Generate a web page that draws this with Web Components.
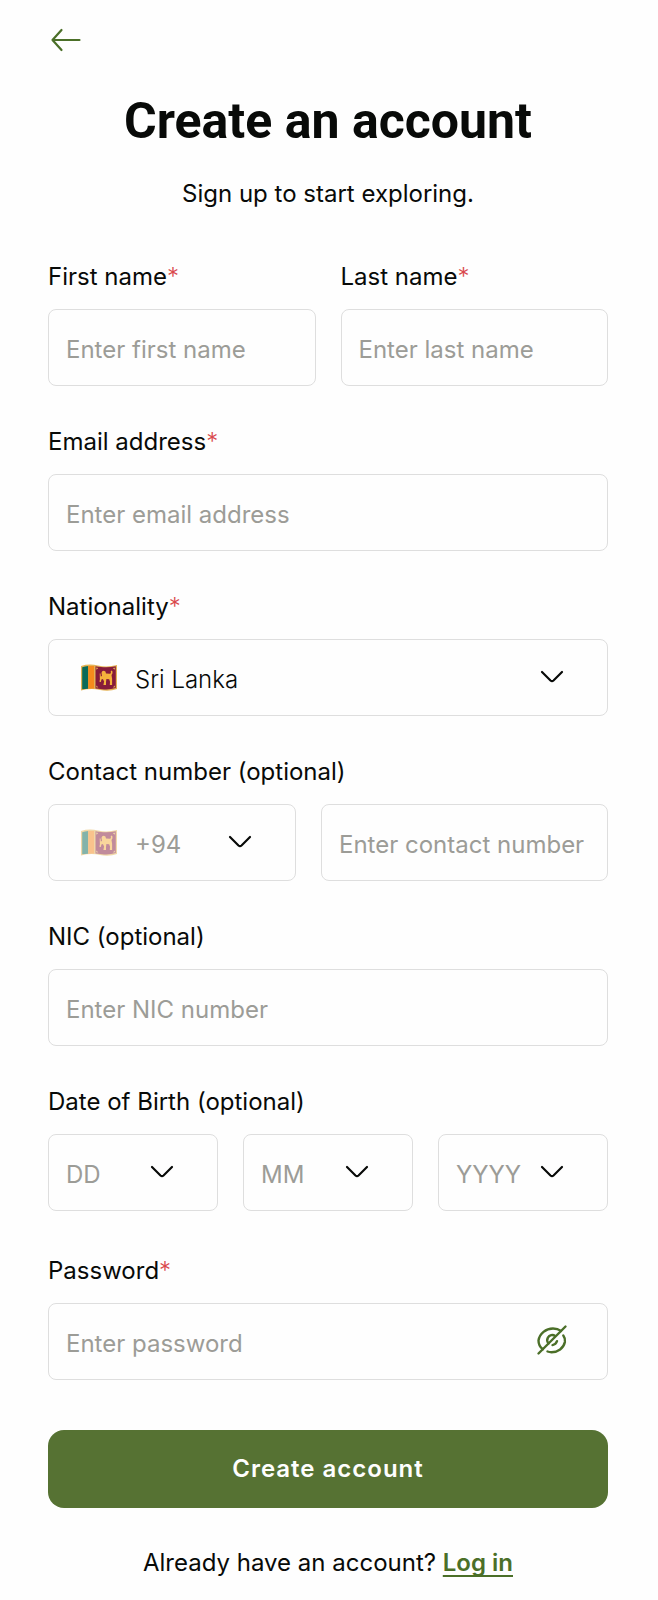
<!DOCTYPE html>
<html lang="en">
<head>
<meta charset="utf-8">
<meta name="viewport" content="width=device-width, initial-scale=1">
<title>Create an account</title>
<style>
  :root {
    --ink: #080a08;
    --muted: #9c9c97;
    --line: #dedede;
    --green: #567233;
    --link: #4b6f28;
    --danger: #d9484c;
    --control-height: 77px;
    --gap: 25px;
  }
  body {
    margin: 0;
    background: #fefefe;
    color: var(--ink);
    font: 400 24px/30px Inter, "Noto Sans", sans-serif;
  }
</style>
</head>
<body>
<sign-up-page></sign-up-page>

<template id="page-template">
  <style>
    :host { display: block; padding: 20px 50px 22px 48px; }
    header { text-align: center; }
    nav { display: flex; }
    nav button {
      display: flex; padding: 4px 2px; border: 0; background: none;
      color: var(--link); cursor: pointer;
    }
    h1 { margin: 33px 0 0; font: 700 50px/56px Roboto, sans-serif; }
    header p { margin: 30px 0 0; }
    form { display: grid; gap: 41px; margin-top: 53px; }
    .pair { display: grid; grid-template-columns: 1fr 1fr; gap: var(--gap); }
    .password { margin-top: 4px; }
    .submit {
      height: 78px; margin-top: 9px; border: 0; border-radius: 16px;
      background: var(--green); color: #fefefe; cursor: pointer;
      font: 600 24px/30px Inter, sans-serif; letter-spacing: 1px;
    }
    footer { margin-top: 40px; text-align: center; }
    a { color: var(--link); font-weight: 600; text-underline-offset: 4px; text-decoration-thickness: 2px; text-decoration-skip-ink: none; }
  </style>
  <nav>
    <button type="button" aria-label="Go back">
      <svg width="32" height="32" viewBox="0 0 32 32" fill="none" stroke="currentColor" stroke-width="2.200" stroke-linecap="round" stroke-linejoin="round"><path d="M29.500 16H2.500M11.500 6 2.500 16l9 10"/></svg>
    </button>
  </nav>
  <header>
    <h1>Create an account</h1>
    <p>Sign up to start exploring.</p>
  </header>
  <form>
    <div class="pair">
      <text-field label="First name" placeholder="Enter first name" required></text-field>
      <text-field label="Last name" placeholder="Enter last name" required></text-field>
    </div>
    <text-field label="Email address" type="email" placeholder="Enter email address" required></text-field>
    <select-field label="Nationality" value="Sri Lanka" flag required></select-field>
    <field-group label="Contact number (optional)" style="--columns: 248fr 287fr">
      <select-field hint="Country code" value="+94" flag disabled></select-field>
      <text-field hint="Contact number" type="tel" placeholder="Enter contact number"></text-field>
    </field-group>
    <text-field label="NIC (optional)" placeholder="Enter NIC number"></text-field>
    <field-group label="Date of Birth (optional)" style="--columns: 1fr 1fr 1fr">
      <select-field hint="Day" value="DD" empty></select-field>
      <select-field hint="Month" value="MM" empty></select-field>
      <select-field hint="Year" value="YYYY" empty></select-field>
    </field-group>
    <text-field class="password" label="Password" type="password" placeholder="Enter password" required></text-field>
    <button class="submit" type="submit">Create account</button>
  </form>
  <footer>Already have an account? <a href="#login">Log in</a></footer>
</template>

<script>
  const fieldStyles = `
    :host { display: block; min-width: 0; }
    label { display: block; margin-bottom: 17px; }
    .mark { color: var(--danger); font-weight: 300; }
    .box { display: grid; align-items: center; }
    .box > * { grid-area: 1 / 1; }
    input, select {
      box-sizing: border-box; width: 100%; min-width: 0; height: var(--control-height); margin: 0;
      padding: 4px 17px 0; border: 1px solid var(--line); border-radius: 8px;
      outline-color: var(--green); background: transparent; color: var(--ink);
      font: inherit; appearance: none; opacity: 1;
    }
    input::placeholder { color: var(--muted); opacity: 1; }
  `;
  const labelMarkup = el => el.hasAttribute('label')
    ? `<label for="control">${el.getAttribute('label')}${el.hasAttribute('required') ? '<span class="mark">*</span>' : ''}</label>`
    : '';
  const hintAttr = el => el.hasAttribute('hint') ? `aria-label="${el.getAttribute('hint')}"` : '';

  class TextField extends HTMLElement {
    connectedCallback() {
      if (this.shadowRoot) return;
      const type = this.getAttribute('type') || 'text';
      this.attachShadow({ mode: 'open' }).innerHTML = `
        <style>${fieldStyles}
          button { justify-self: end; display: flex; margin: 0 40px 4px 0; padding: 0; border: 0; background: none; color: var(--link); cursor: pointer; }
        </style>
        ${labelMarkup(this)}
        <div class="box">
          <input id="control" type="${type}" placeholder="${this.getAttribute('placeholder')}" ${hintAttr(this)}>
          ${type === 'password' ? '<button type="button" aria-label="Show password"><eye-off-icon></eye-off-icon></button>' : ''}
        </div>`;
      const toggle = this.shadowRoot.querySelector('button');
      if (toggle) toggle.addEventListener('click', () => {
        const input = this.shadowRoot.querySelector('input');
        input.type = input.type === 'password' ? 'text' : 'password';
      });
    }
  }

  class SelectField extends HTMLElement {
    connectedCallback() {
      if (this.shadowRoot) return;
      this.attachShadow({ mode: 'open' }).innerHTML = `
        <style>${fieldStyles}
          .chevron { justify-self: end; margin: 0 44px 2px 0; pointer-events: none; }
          flag-icon { margin-left: 33px; pointer-events: none; }
          select { font-weight: 300; }
          :host([flag]) select { padding-left: 86px; }
          :host([empty]) select, select:disabled { color: var(--muted); font-weight: 400; }
          :host([disabled]) flag-icon { opacity: .5; }
        </style>
        ${labelMarkup(this)}
        <div class="box">
          <select id="control" ${hintAttr(this)} ${this.hasAttribute('disabled') ? 'disabled' : ''}>
            <option>${this.getAttribute('value')}</option>
          </select>
          ${this.hasAttribute('flag') ? '<flag-icon></flag-icon>' : ''}
          <svg class="chevron" width="24" height="14" viewBox="0 0 24 14" fill="none" stroke="#080a08" stroke-width="2.200" stroke-linecap="round"><path d="M2 2l8.500 8.500q1.500 1.300 3 0L22 2"/></svg>
        </div>`;
    }
  }

  class FieldGroup extends HTMLElement {
    connectedCallback() {
      if (this.shadowRoot) return;
      this.attachShadow({ mode: 'open' }).innerHTML = `
        <style>
          :host { display: block; }
          fieldset { min-width: 0; margin: 0; padding: 0; border: 0; }
          legend { padding: 0; margin-bottom: 17px; }
          .row { display: grid; grid-template-columns: var(--columns); gap: var(--gap); }
        </style>
        <fieldset><legend>${this.getAttribute('label')}</legend><div class="row"><slot></slot></div></fieldset>`;
    }
  }

  class FlagIcon extends HTMLElement {
    connectedCallback() {
      if (this.shadowRoot) return;
      this.attachShadow({ mode: 'open' }).innerHTML = `
        <style>:host { display: block; width: 36px; height: 28px; } svg { display: block; }</style>
        <svg width="36" height="28" viewBox="0 0 36 28" aria-hidden="true">
          <path d="M0 2Q8-.5 17 1.500T36 1V25Q28 28 19 26T0 26.500Z" fill="#e5b355"/>
          <path d="M1.200 3.300Q4 2.400 7.200 2V24.700Q4 24.800 1.200 25.300Z" fill="#0b6a58"/>
          <path d="M7.200 2Q10 1.800 13 2.100V24.500Q10 24.400 7.200 24.700Z" fill="#f58a1c"/>
          <path d="M14.500 2.300Q17 2.700 20 3.100Q28 3.900 34.800 2.200V24Q28 26.100 21 25.200Q17 24.500 14.500 24.500Z" fill="#861b3b"/>
          <path d="M20.500 8.700q.3-2 2.300-2 2.200.2 2.200 2.800l4 .3q1.100-.2.900-1.500-.7-1.300.6-1.700 1.600.6.9 2.900l-.9 1.500.6 3.700v6.300h-2.300l.2-3.200-.8-2.600-2.800-.1-.4 3v2.900h-2.600l.7-3.400-1.200-2.700-1.500.6-.5 2.600-1.500-.3.500-2.500-.2-5.800h.8l.3 3 1.200-.6Z" fill="#f5b23c"/>
          <path d="M15.200 3.600l2 .3-1.700 1.800zM34 3.700l-2.200.3 1.900 1.700zM15.200 23.300l2.100.2-1.800-1.900zM34 23.200l-2.100.3 1.800-2z" fill="#e5b355"/>
        </svg>`;
    }
  }

  class EyeOffIcon extends HTMLElement {
    connectedCallback() {
      if (this.shadowRoot) return;
      this.attachShadow({ mode: 'open' }).innerHTML = `
        <style>:host { display: block; } svg { display: block; }</style>
        <svg width="32" height="32" viewBox="0 0 32 32" fill="none" stroke="currentColor" stroke-width="2.400" stroke-linecap="round" aria-hidden="true">
          <path d="M2.500 29.500 29.500 2.500"/>
          <path d="M6.800 25.200C4.500 23.500 2.500 20 2.500 16.500 3.500 9.500 10 4.500 17 4.500c3 0 5.800.8 8 2.400"/>
          <path d="M27.300 11.500c1.500 2 2 4.200 1.600 6.500-1.300 6.200-7 10.200-13.400 10.200-1.300 0-2.700-.2-4-.7"/>
          <path d="M12.600 19.400c-1.500-1.500-1.800-3.700-.7-5.700 1.500-2.600 4.800-3.500 7.200-1.700"/>
          <path d="M21 17.200c-.7 2-2.300 3.500-4.500 3.900"/>
        </svg>`;
    }
  }

  class SignUpPage extends HTMLElement {
    connectedCallback() {
      if (this.shadowRoot) return;
      this.attachShadow({ mode: 'open' })
        .append(document.getElementById('page-template').content.cloneNode(true));
    }
  }

  customElements.define('flag-icon', FlagIcon);
  customElements.define('eye-off-icon', EyeOffIcon);
  customElements.define('text-field', TextField);
  customElements.define('select-field', SelectField);
  customElements.define('field-group', FieldGroup);
  customElements.define('sign-up-page', SignUpPage);
</script>
</body>
</html>
